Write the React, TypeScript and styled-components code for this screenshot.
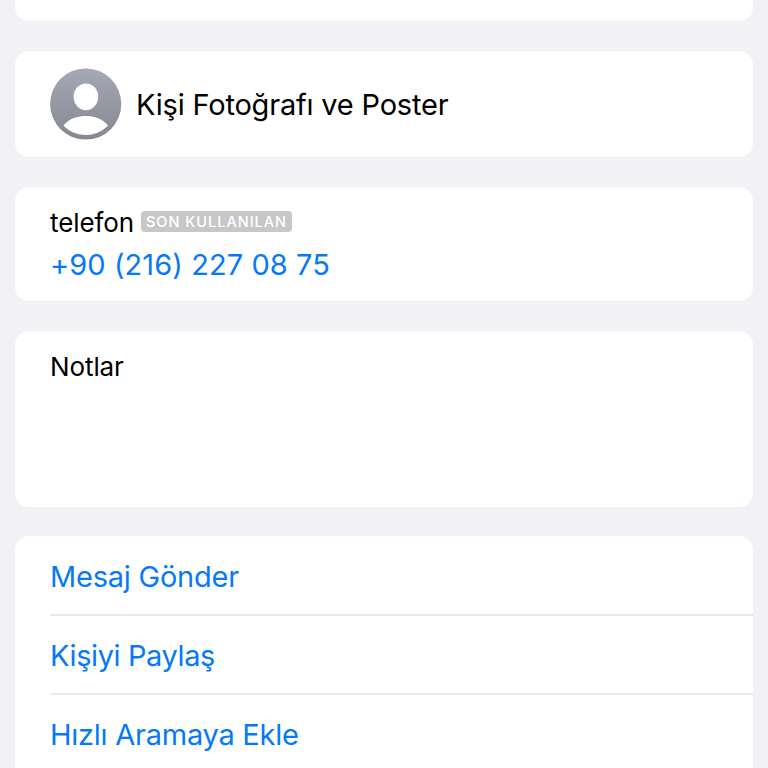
import React from 'react';
import styled, { createGlobalStyle } from 'styled-components';

const GlobalStyle = createGlobalStyle`
  html, body { margin: 0; padding: 0; background: #f2f1f6; }
  body { font-family: Inter, Roboto, sans-serif; height: 768px; overflow: hidden; }
  * { box-sizing: border-box; }
`;

const Page = styled.main`
  width: 768px;
  height: 768px;
  padding: 0 15px;
  display: flex;
  flex-direction: column;
  gap: 29.5px;
  overflow: hidden;
  color: #000;
`;

const Card = styled.section<{ $height: number; $edge?: 'top' | 'bottom' }>`
  flex: none;
  height: ${(p) => p.$height}px;
  background: #fff;
  border-radius: ${(p) =>
    p.$edge === 'top' ? '0 0 14px 14px' : p.$edge === 'bottom' ? '14px 14px 0 0' : '14px'};
  overflow: hidden;
`;

const PhotoRow = styled.div`
  height: 100%;
  display: flex;
  align-items: center;
  gap: 14px;
  padding-left: 35px;
`;

const Title = styled.span`
  padding-top: 2px;
  font-size: 29px;
  line-height: 40px;
  letter-spacing: -0.2px;
  white-space: nowrap;
`;

const Field = styled.div`
  padding: 18px 35px;
`;

const LabelRow = styled.div`
  display: flex;
  align-items: center;
  gap: 7px;
  height: 36px;
`;

const Label = styled.span`
  font-size: 26px;
  line-height: 36px;
  letter-spacing: -0.1px;
`;

const Badge = styled.span`
  height: 21px;
  width: 151px;
  margin-bottom: 3px;
  padding-left: 5px;
  border-radius: 4px;
  background: #c7c7c9;
  color: #fff;
  font-size: 14.5px;
  line-height: 21px;
  font-weight: 500;
  letter-spacing: 1px;
  white-space: nowrap;
`;

const Phone = styled.a`
  display: block;
  margin-top: 4px;
  color: #067af6;
  font-size: 29px;
  line-height: 40px;
  letter-spacing: 0.08px;
  white-space: nowrap;
`;

const Action = styled.button<{ $tracking: number }>`
  display: flex;
  align-items: center;
  width: calc(100% - 35px);
  height: 79px;
  margin: 0 0 0 35px;
  padding: 2px 0 0;
  border: 0;
  border-bottom: 2px solid #e9e9eb;
  background: none;
  color: #067af6;
  font: inherit;
  font-size: 29px;
  letter-spacing: ${(p) => p.$tracking}px;
  text-align: left;

  &:first-child {
    height: 80px;
    padding-top: 3px;
  }
`;

const ACTIONS = [
  { label: 'Mesaj Gönder', tracking: -0.23 },
  { label: 'Kişiyi Paylaş', tracking: -0.4 },
  { label: 'Hızlı Aramaya Ekle', tracking: -0.25 },
];

const Avatar = () => (
  <svg width="72" height="72" viewBox="0 0 72 72" aria-hidden="true">
    <defs>
      <linearGradient id="avatarFill" x1="0" y1="0" x2="0" y2="1">
        <stop offset="0" stopColor="#a5a9b6" />
        <stop offset="1" stopColor="#858891" />
      </linearGradient>
      <clipPath id="avatarInner">
        <circle cx="35.7" cy="36" r="31" />
      </clipPath>
    </defs>
    <circle cx="35.7" cy="36" r="35.6" fill="url(#avatarFill)" />
    <g fill="#fff" clipPath="url(#avatarInner)">
      <ellipse cx="35.9" cy="28.8" rx="12.3" ry="13.4" />
      <ellipse cx="35.7" cy="65.4" rx="24.8" ry="17.4" />
    </g>
  </svg>
);

export default function App() {
  return (
    <>
      <GlobalStyle />
      <Page>
        <Card $height={21} $edge="top" />
        <Card $height={106.5}>
          <PhotoRow>
            <Avatar />
            <Title>Kişi Fotoğrafı ve Poster</Title>
          </PhotoRow>
        </Card>
        <Card $height={114.5}>
          <Field>
            <LabelRow>
              <Label>telefon</Label>
              <Badge>SON KULLANILAN</Badge>
            </LabelRow>
            <Phone>+90 (216) 227 08 75</Phone>
          </Field>
        </Card>
        <Card $height={176.3}>
          <Field>
            <Label>Notlar</Label>
          </Field>
        </Card>
        <Card $height={240} $edge="bottom">
          {ACTIONS.map(({ label, tracking }) => (
            <Action key={label} $tracking={tracking}>
              {label}
            </Action>
          ))}
        </Card>
      </Page>
    </>
  );
}
